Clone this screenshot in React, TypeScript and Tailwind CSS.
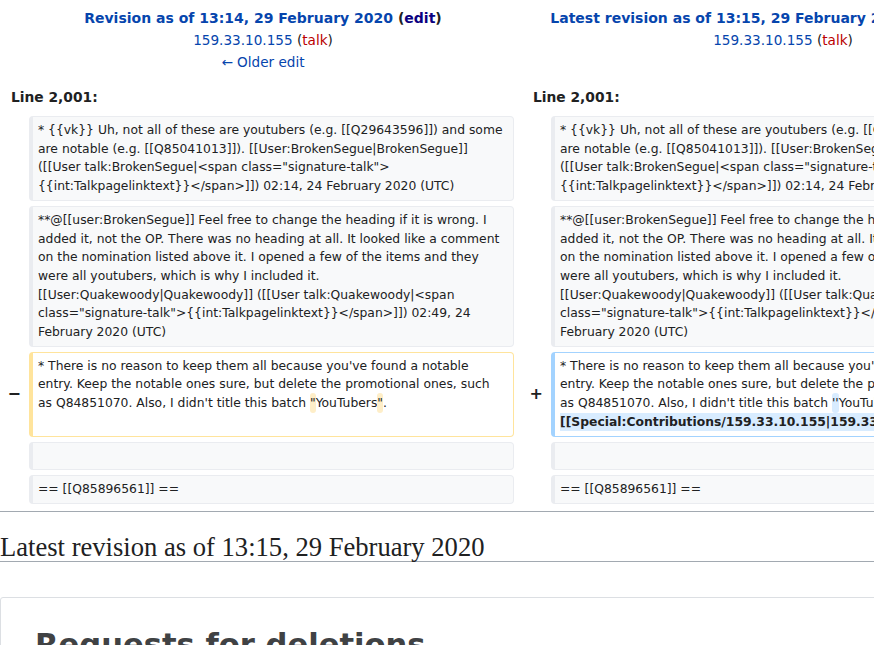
const contextA = [
  "* {{vk}} Uh, not all of these are youtubers (e.g. [[Q29643596]]) and some",
  "are notable (e.g. [[Q85041013]]). [[User:BrokenSegue|BrokenSegue]]",
  '([[User talk:BrokenSegue|<span class="signature-talk">',
  "{{int:Talkpagelinktext}}</span>]]) 02:14, 24 February 2020 (UTC)",
];

const contextB = [
  "**@[[user:BrokenSegue]] Feel free to change the heading if it is wrong. I",
  "added it, not the OP. There was no heading at all. It looked like a comment",
  "on the nomination listed above it. I opened a few of the items and they",
  "were all youtubers, which is why I included it.",
  "[[User:Quakewoody|Quakewoody]] ([[User talk:Quakewoody|<span",
  'class="signature-talk">{{int:Talkpagelinktext}}</span>]]) 02:49, 24',
  "February 2020 (UTC)",
];

const changedHead = [
  "* There is no reason to keep them all because you've found a notable",
  "entry. Keep the notable ones sure, but delete the promotional ones, such",
];

const Lines = ({ lines }: { lines: string[] }) => (
  <>
    {lines.map((l, i) => (
      <div key={i} className="whitespace-pre">
        {l}
      </div>
    ))}
  </>
);

const Context = ({ children }: { children: React.ReactNode }) => (
  <div className="rounded-[4px] border border-[#eaecf0] border-l-4 bg-[#f8f9fa] px-[5px] py-[4px] overflow-hidden">
    {children}
  </div>
);

const Marker = ({ sign }: { sign: string }) => (
  <div className="flex items-center justify-end pr-[8px] text-[16px] font-bold text-[#202122]">
    {sign}
  </div>
);

export default function App() {
  return (
    <div className="h-screen w-full overflow-hidden bg-white font-['DejaVu_Sans',sans-serif] text-[#202122]">
      <div className="w-[1036px]">
        <div className="grid grid-cols-[29px_485px_37px_485px] gap-y-[5px] text-[12.35px] leading-[18.7px]">
          {/* headers */}
          <div className="col-span-2 pl-[12px] pt-[7px] text-center text-[13.6px] leading-[22px]">
            <div className="whitespace-nowrap text-[14px] font-bold">
              <a href="#" className="text-[#0645ad]">
                Revision as of 13:14, 29 February 2020
              </a>{" "}
              (<a href="#" className="text-[#0b0080]">edit</a>)
            </div>
            <div>
              <a href="#" className="text-[#0645ad]">159.33.10.155</a> (
              <a href="#" className="text-[#ba0000]">talk</a>)
            </div>
            <div>
              <a href="#" className="text-[#0645ad]">← Older edit</a>
            </div>
          </div>
          <div className="col-span-2 pl-[16px] pt-[7px] text-center text-[13.6px] leading-[22px]">
            <div className="whitespace-nowrap text-[14px] font-bold">
              <a href="#" className="text-[#0645ad]">
                Latest revision as of 13:15, 29 February 2020
              </a>{" "}
              (<a href="#" className="text-[#0b0080]">edit</a>) (
              <a href="#" className="text-[#0645ad]">undo</a>)
            </div>
            <div>
              <a href="#" className="text-[#0645ad]">159.33.10.155</a> (
              <a href="#" className="text-[#ba0000]">talk</a>)
            </div>
          </div>

          {/* line labels */}
          <div className="col-span-2 mt-[9px] mb-[4px] pl-[11px] text-[13.8px] font-bold leading-[20px]">
            Line 2,001:
          </div>
          <div className="col-span-2 mt-[9px] mb-[4px] pl-[19px] text-[13.8px] font-bold leading-[20px]">
            Line 2,001:
          </div>

          {/* context 1 */}
          <div />
          <Context>
            <Lines lines={contextA} />
          </Context>
          <div />
          <Context>
            <Lines lines={contextA} />
          </Context>

          {/* context 2 */}
          <div />
          <Context>
            <Lines lines={contextB} />
          </Context>
          <div />
          <Context>
            <Lines lines={contextB} />
          </Context>

          {/* changed paragraph */}
          <Marker sign="−" />
          <div className="rounded-[4px] border border-[#ffe49c] border-l-4 bg-white px-[5px] py-[4px] overflow-hidden">
            <Lines lines={changedHead} />
            <div className="whitespace-pre">
              as Q84851070. Also, I didn't title this batch{" "}
              <span className="rounded-[3px] bg-[#feeec8] py-[3px]">"</span>
              YouTubers
              <span className="rounded-[3px] bg-[#feeec8] py-[3px]">"</span>.
            </div>
          </div>
          <Marker sign="+" />
          <div className="rounded-[4px] border border-[#a3d3ff] border-l-4 bg-white px-[5px] py-[4px] overflow-hidden">
            <Lines lines={changedHead} />
            <div className="whitespace-pre">
              as Q84851070. Also, I didn't title this batch{" "}
              <span className="rounded-[3px] bg-[#d8ecff] py-[3px]">''</span>
              YouTubers
              <span className="rounded-[3px] bg-[#d8ecff] py-[3px]">''</span>.
            </div>
            <div className="whitespace-pre">
              <span className="bg-[#d8ecff] py-[2px] font-bold">
                [[Special:Contributions/159.33.10.155|159.33.10.155]] ([[User talk:159.33.10.155|talk]]) 13:15, 29 February 2020 (UTC)
              </span>
            </div>
          </div>

          {/* empty */}
          <div />
          <Context>&nbsp;</Context>
          <div />
          <Context>&nbsp;</Context>

          {/* heading line */}
          <div />
          <Context>== [[Q85896561]] ==</Context>
          <div />
          <Context>== [[Q85896561]] ==</Context>
        </div>
      </div>

      <div className="mt-[7px] w-[874px] border-t border-[#a2a9b1]" />

      <h2 className="mt-[21px] w-[874px] border-b border-[#a2a9b1] font-['Liberation_Serif',serif] text-[26.6px] leading-[28px]">
        Latest revision as of 13:15, 29 February 2020
      </h2>

      <div className="mt-[35px] w-[900px] rounded-[3px] border border-[#dcdfe3] pt-[28px] pl-[34px]">
        <h1 className="text-[30.6px] font-bold leading-[37px] text-[#404244]">
          Requests for deletions
        </h1>
      </div>
    </div>
  );
}
